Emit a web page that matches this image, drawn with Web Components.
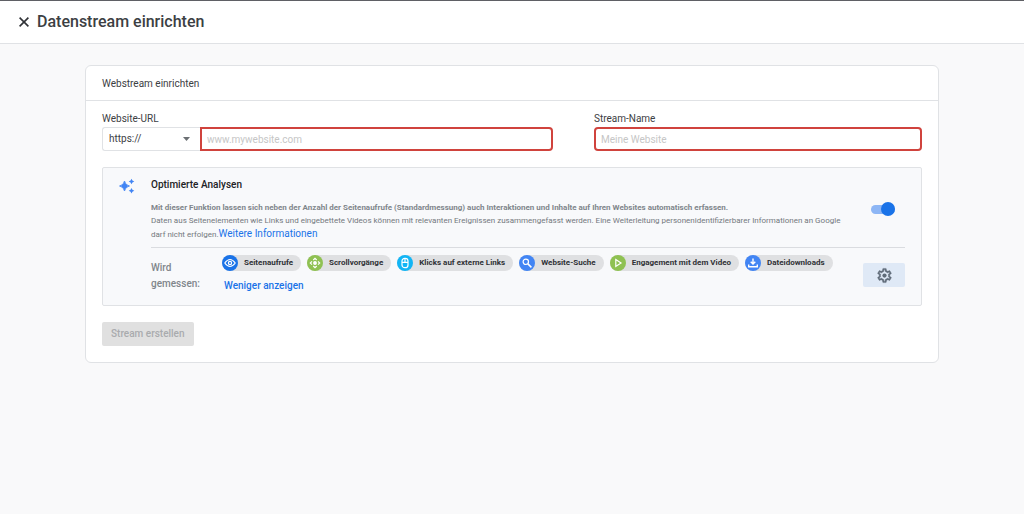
<!DOCTYPE html>
<html lang="de">
<head>
<meta charset="utf-8">
<meta name="viewport" content="width=device-width, initial-scale=1">
<title>Datenstream einrichten</title>
<style>
  body {
    margin: 0;
    min-height: 100vh;
    background: #f9f9fa;
    color: #3c4043;
    font-family: Roboto, "Liberation Sans", sans-serif;
    font-size: 10px;
    line-height: 16px;
    --blue: #1a73e8;
    --line: #e0e2e5;
    --grey: #80868b;
  }
</style>
</head>
<body>
<page-header>Datenstream einrichten</page-header>
<stream-card>
  <span slot="title">Webstream einrichten</span>
  <stream-form></stream-form>
  <analysis-panel>
    <measure-chip icon="eye" color="#1a73e8">Seitenaufrufe</measure-chip>
    <measure-chip icon="scroll" color="#8fc152">Scrollvorgänge</measure-chip>
    <measure-chip icon="mouse" color="#12b5f5">Klicks auf externe Links</measure-chip>
    <measure-chip icon="search" color="#4285f4">Website-Suche</measure-chip>
    <measure-chip icon="play" color="#8fc152">Engagement mit dem Video</measure-chip>
    <measure-chip icon="download" color="#4285f4">Dateidownloads</measure-chip>
  </analysis-panel>
  <submit-button slot="actions">Stream erstellen</submit-button>
</stream-card>

<script>
// small helper: attaches an open shadow root and fills it
class BaseElement extends HTMLElement {
  constructor() {
    super();
    this.attachShadow({ mode: "open" });
  }
  render(html) {
    const template = document.createElement("template");
    template.innerHTML = html;
    this.shadowRoot.replaceChildren(template.content.cloneNode(true));
  }
}

// top bar with close button
class PageHeader extends BaseElement {
  connectedCallback() {
    this.render(`
      <style>
        :host {
          display: flex;
          align-items: center;
          gap: 5px;
          box-sizing: border-box;
          height: 44px;
          padding: 0 16px;
          background: #fff;
          border-top: 1px solid #5f6065;
          border-bottom: 1px solid var(--line);
        }
        button {
          display: flex;
          padding: 2px;
          border: 0;
          background: none;
          color: #303236;
        }
        h1 {
          margin: 0;
          font: 500 16px/20px Roboto, sans-serif;
        }
      </style>
      <button type="button" aria-label="Schließen">
        <svg width="12" height="12" viewBox="0 0 12 12" fill="none" stroke="currentColor" stroke-width="1.6"><path d="M1.6 1.6l8.8 8.8M10.4 1.6l-8.8 8.8"/></svg>
      </button>
      <h1><slot></slot></h1>
    `);
  }
}
customElements.define("page-header", PageHeader);

// white card with a title row, content and actions
class StreamCard extends BaseElement {
  connectedCallback() {
    this.render(`
      <style>
        :host {
          display: block;
          margin: 21px 85px;
          background: #fff;
          border: 1px solid var(--line);
          border-radius: 6px;
        }
        h2 {
          margin: 0;
          padding: 10px 16px 8px;
          border-bottom: 1px solid var(--line);
          font-size: 10px;
          font-weight: 400;
          line-height: 16px;
        }
        .content {
          display: flex;
          flex-direction: column;
          gap: 16px;
          padding: 10px 16px 16px;
        }
      </style>
      <h2><slot name="title"></slot></h2>
      <div class="content">
        <slot></slot>
        <slot name="actions"></slot>
      </div>
    `);
  }
}
customElements.define("stream-card", StreamCard);

// url and name fields
class StreamForm extends BaseElement {
  connectedCallback() {
    this.render(`
      <style>
        :host {
          display: grid;
          grid-template-columns: 11fr 8fr;
          gap: 41px;
        }
        label {
          display: block;
          color: #3c4043;
        }
        .row {
          display: flex;
        }
        .select {
          display: grid;
          flex: 0 0 98px;
          align-items: center;
        }
        .select > * {
          grid-area: 1 / 1;
        }
        .select svg {
          justify-self: end;
          margin-right: 10px;
          pointer-events: none;
        }
        select, input {
          box-sizing: border-box;
          width: 100%;
          min-width: 0;
          height: 24px;
          margin: 0;
          padding: 0 6px;
          background: #fff;
          color: #3c4043;
          font: inherit;
          outline: 0;
        }
        select {
          appearance: none;
          border: 1px solid var(--line);
          border-right: 0;
          border-radius: 3px 0 0 3px;
        }
        input {
          padding: 0 5px;
          border: 2px solid #d0433d;
          border-radius: 4px;
        }
        .row input {
          border-radius: 0 4px 4px 0;
        }
        input::placeholder {
          color: #c6c6c6;
        }
      </style>
      <div>
        <label for="url">Website-URL</label>
        <div class="row">
          <div class="select">
            <select aria-label="Protokoll">
              <option>https://</option>
              <option>http://</option>
            </select>
            <svg width="7" height="4" viewBox="0 0 7 4"><path d="M0 0h7L3.500 4z" fill="#6b6f73"/></svg>
          </div>
          <input id="url" type="text" placeholder="www.mywebsite.com">
        </div>
      </div>
      <div>
        <label for="name">Stream-Name</label>
        <input id="name" type="text" placeholder="Meine Website">
      </div>
    `);
  }
}
customElements.define("stream-form", StreamForm);

// on/off switch
class ToggleSwitch extends BaseElement {
  connectedCallback() {
    this.render(`
      <style>
        :host {
          display: block;
        }
        input {
          appearance: none;
          display: flex;
          align-items: center;
          width: 24px;
          height: 9px;
          margin: 0;
          border-radius: 5px;
          background: #c4c7ca;
        }
        input::before {
          content: "";
          width: 14px;
          height: 14px;
          flex: none;
          border-radius: 50%;
          background: #fff;
        }
        input:checked {
          justify-content: flex-end;
          background: #8db6f5;
        }
        input:checked::before {
          background: var(--blue);
        }
      </style>
      <input type="checkbox" role="switch" checked aria-label="Optimierte Analysen">
    `);
  }
}
customElements.define("toggle-switch", ToggleSwitch);

// panel for the enhanced measurement settings, chips are slotted
class AnalysisPanel extends BaseElement {
  connectedCallback() {
    this.render(`
      <style>
        :host {
          display: grid;
          grid-template-columns: 16px 1fr;
          gap: 16px;
          padding: 9px 16px 11px;
          background: #f8f9fb;
          border: 1px solid var(--line);
          border-radius: 2px;
        }
        h3 {
          margin: 0 0 8px;
          color: #202124;
          font-size: 10px;
          font-weight: 500;
          line-height: 16px;
        }
        .intro {
          display: flex;
          align-items: center;
          gap: 4px;
          padding-bottom: 6px;
          border-bottom: 1px solid #dadce0;
        }
        p {
          flex: 1;
          margin: 0;
          color: #73787d;
          font-size: 8px;
          line-height: 13px;
        }
        strong {
          display: block;
          font-weight: 700;
          color: var(--grey);
        }
        a {
          color: var(--blue);
          font-size: 10px;
          text-decoration: none;
        }
        toggle-switch {
          margin: 0 10px 24px 0;
        }
        .measured {
          display: flex;
          gap: 16px;
          padding-top: 7px;
        }
        .caption {
          flex: 0 0 55px;
          padding-top: 5px;
          color: var(--grey);
          font-weight: 500;
        }
        .list {
          flex: 1;
        }
        .chips {
          display: flex;
          flex-wrap: wrap;
          gap: 6px;
        }
        .less {
          margin: 7px 0 0;
          padding: 0 2px;
          border: 0;
          background: none;
          color: var(--blue);
          font: 500 10px/16px Roboto, sans-serif;
        }
        .settings {
          display: flex;
          align-items: center;
          justify-content: center;
          width: 42px;
          height: 24px;
          margin-top: 8px;
          padding: 0;
          border: 0;
          border-radius: 2px;
          background: #dfe9f6;
          color: #5f6b78;
        }
      </style>
      <svg width="16" height="18" viewBox="0 0 16 18" fill="#4285f4">
        <path d="M5.500 4q.8 4.200 5 5-4.200.8-5 5-.8-4.200-5-5 4.200-.8 5-5z" stroke="#4285f4" stroke-width=".8"/>
        <path d="M12.500 1.700q.5 2.300 2.800 2.800-2.300.5-2.800 2.800-.5-2.300-2.800-2.800 2.300-.5 2.800-2.800zM12.500 10.900q.5 2.300 2.800 2.800-2.300.5-2.800 2.800-.5-2.300-2.800-2.800 2.300-.5 2.800-2.800z"/>
      </svg>
      <div>
        <h3>Optimierte Analysen</h3>
        <div class="intro">
          <p><strong>Mit dieser Funktion lassen sich neben der Anzahl der Seitenaufrufe (Standardmessung) auch Interaktionen und Inhalte auf Ihren Websites automatisch erfassen.</strong>
          Daten aus Seitenelementen wie Links und eingebettete Videos können mit relevanten Ereignissen zusammengefasst werden. Eine Weiterleitung personenidentifizierbarer Informationen an Google<br>
          darf nicht erfolgen.<a href="#">Weitere Informationen</a></p>
          <toggle-switch></toggle-switch>
        </div>
        <div class="measured">
          <div class="caption">Wird gemessen:</div>
          <div class="list">
            <div class="chips"><slot></slot></div>
            <button class="less" type="button">Weniger anzeigen</button>
          </div>
          <button class="settings" type="button" aria-label="Einstellungen">
            <svg width="17" height="17" viewBox="0 0 24 24" fill="currentColor"><path stroke="currentColor" stroke-width=".5" d="M19.430 12.980c.04-.32.07-.64.07-.98s-.03-.66-.07-.98l2.110-1.650c.19-.15.24-.42.12-.64l-2-3.460c-.09-.16-.26-.25-.44-.25-.06 0-.12.010-.17.030l-2.490 1c-.52-.4-1.080-.73-1.690-.98l-.38-2.650C14.460 2.180 14.250 2 14 2h-4c-.25 0-.46.18-.49.420l-.38 2.650c-.61.25-1.170.59-1.690.98l-2.490-1c-.06-.02-.12-.03-.18-.03-.17 0-.34.090-.43.250l-2 3.460c-.13.22-.07.49.12.64l2.110 1.650c-.04.32-.07.65-.07.98s.03.66.07.98l-2.110 1.650c-.19.15-.24.42-.12.640l2 3.460c.09.16.26.25.44.25.06 0 .12-.01.17-.03l2.490-1c.52.4 1.080.73 1.690.98l.38 2.650c.03.24.24.42.49.42h4c.25 0 .46-.18.49-.42l.38-2.650c.61-.25 1.170-.59 1.690-.98l2.490 1c.06.02.12.03.18.03.17 0 .34-.09.43-.25l2-3.460c.12-.22.07-.49-.12-.64l-2.110-1.650zm-1.980-1.710c.04.31.05.52.05.73s-.02.43-.05.73l-.14 1.130.89.7 1.080.84-.7 1.210-1.270-.51-1.040-.42-.9.68c-.43.32-.84.56-1.250.73l-1.060.43-.16 1.130-.2 1.350h-1.400l-.19-1.350-.16-1.130-1.060-.43c-.43-.18-.83-.41-1.230-.71l-.91-.7-1.060.43-1.270.51-.7-1.210 1.080-.84.89-.7-.14-1.130c-.03-.31-.05-.54-.05-.74s.02-.43.05-.73l.14-1.130-.89-.7-1.080-.84.7-1.210 1.270.51 1.040.42.9-.68c.43-.32.84-.56 1.250-.73l1.060-.43.16-1.130.2-1.350h1.390l.19 1.350.16 1.130 1.060.43c.43.18.83.41 1.230.71l.91.7 1.060-.43 1.270-.51.7 1.210-1.070.85-.89.7.14 1.130z"/><circle cx="12" cy="12" r="3"/></svg>
          </button>
        </div>
      </div>
    `);
  }
}
customElements.define("analysis-panel", AnalysisPanel);

const chipIcons = {
  eye: `<path d="M.8 6q5.200-7 10.400 0-5.200 7-10.400 0z"/><circle cx="6" cy="6" r="1.600"/>`,
  scroll: `<circle cx="6" cy="6" r="1.300" fill="#fff"/><path d="M4.300 3L6 1.300 7.700 3M4.300 9L6 10.700 7.700 9M3 4.300L1.300 6 3 7.700M9 4.300L10.700 6 9 7.700"/>`,
  mouse: `<rect x="3" y="1.300" width="6" height="9.400" rx="2.800"/><path d="M3 5.300h6M6 1.300v4"/>`,
  search: `<circle cx="4.800" cy="4.800" r="2.700"/><path d="M6.900 6.900l3.500 3.500" stroke-width="1.500"/>`,
  play: `<path d="M3.800 2.600L9 6 3.800 9.400z"/>`,
  download: `<path d="M6 1.500v5M3.700 4.800L6 7.100l2.300-2.300M1.700 7.500v2.300h8.600V7.500" stroke-width="1.400"/>`
};

// pill with a round icon on its left end
class MeasureChip extends BaseElement {
  connectedCallback() {
    this.render(`
      <style>
        :host {
          display: flex;
          align-items: center;
          gap: 6px;
          height: 16px;
          padding-right: 8px;
          border-radius: 8px;
          background: #dfe0e2;
          color: #303236;
          font-size: 8px;
          font-weight: 700;
          white-space: nowrap;
        }
        .icon {
          display: flex;
          align-items: center;
          justify-content: center;
          width: 16px;
          height: 16px;
          border-radius: 50%;
          background: ${this.getAttribute("color")};
        }
      </style>
      <span class="icon"><svg width="12" height="12" viewBox="0 0 12 12" fill="none" stroke="#fff" stroke-width="1.200">${chipIcons[this.getAttribute("icon")]}</svg></span>
      <slot></slot>
    `);
  }
}
customElements.define("measure-chip", MeasureChip);

class SubmitButton extends BaseElement {
  connectedCallback() {
    this.render(`
      <style>
        :host {
          display: block;
        }
        button {
          display: block;
          height: 24px;
          padding: 0 9px;
          border: 0;
          border-radius: 2px;
          background: #e0e0e0;
          color: #a9abae;
          font: 500 10px/16px Roboto, sans-serif;
        }
      </style>
      <button type="button" disabled><slot></slot></button>
    `);
  }
}
customElements.define("submit-button", SubmitButton);
</script>
</body>
</html>
